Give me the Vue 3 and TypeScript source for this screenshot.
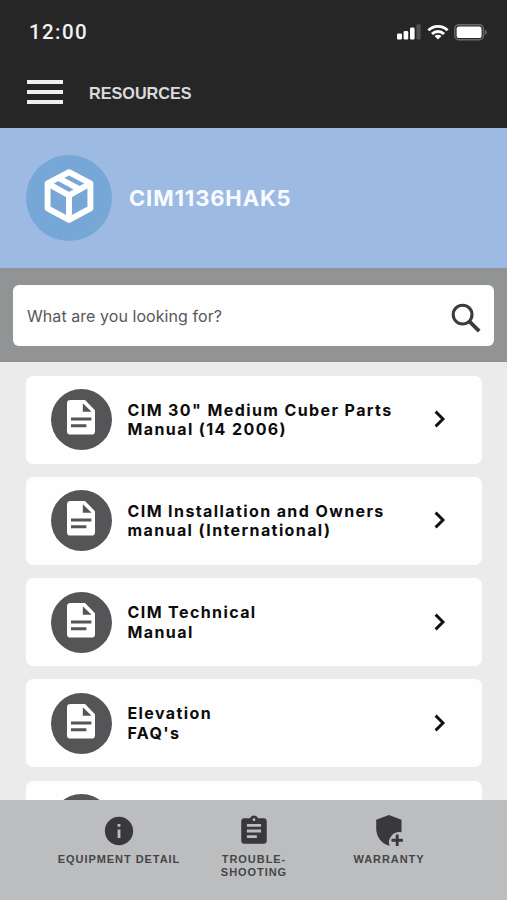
<script setup lang="ts">
interface Resource {
  id: number
  lines: string[]
}

const resources: Resource[] = [
  { id: 1, lines: ['CIM 30" Medium Cuber Parts', 'Manual (14 2006)'] },
  { id: 2, lines: ['CIM Installation and Owners', 'manual (International)'] },
  { id: 3, lines: ['CIM Technical', 'Manual'] },
  { id: 4, lines: ['Elevation', "FAQ's"] },
  { id: 5, lines: [] },
]
</script>

<template>
  <div class="screen">
    <header class="header">
      <div class="status">
        <span class="time">12:00</span>
        <div class="indicators">
          <svg class="signal" width="24" height="16" viewBox="0 0 24 16">
            <rect x="0" y="9.6" width="5" height="6" rx="1.3" fill="#fff" />
            <rect x="6.6" y="7" width="4.6" height="8.6" rx="1.3" fill="#fff" />
            <rect x="13" y="3.6" width="4.6" height="12" rx="1.3" fill="#fff" />
            <rect x="19.4" y="0.3" width="4.2" height="15.3" rx="1.3" fill="#515151" />
          </svg>
          <svg class="wifi" width="22" height="16" viewBox="0 0 22 16">
            <g fill="none" stroke="#fff" stroke-width="2.9">
              <path d="M1.4 6.3a13.6 13.6 0 0 1 19.2 0" />
              <path d="M5 10a8.5 8.5 0 0 1 12 0" />
            </g>
            <path d="M11 15.6 7.5 12.1a5 5 0 0 1 7 0z" fill="#fff" />
          </svg>
          <svg class="battery" width="34" height="17" viewBox="0 0 34 17">
            <rect x="0.8" y="0.8" width="28.6" height="15" rx="4" fill="none" stroke="#6a6a6a" stroke-width="1.4" />
            <rect x="2.6" y="2.5" width="25" height="11.6" rx="2.2" fill="#fff" />
            <path d="M30.8 5.6c2.6 1 2.6 4.6 0 5.6z" fill="#6a6a6a" />
          </svg>
        </div>
      </div>
      <div class="titlebar">
        <button class="menu" aria-label="Menu"><i></i><i></i><i></i></button>
        <h1>RESOURCES</h1>
      </div>
    </header>

    <section class="equipment">
      <div class="equipment-icon">
        <svg width="52" height="58" viewBox="0 0 52 58">
          <g fill="none" stroke="#fff" stroke-width="5.9">
            <path d="M26 5.2 47.4 16.4V41.4L26 52.8 4.6 41.4V16.4z" stroke-linejoin="round" />
            <path d="M4.6 16.4 26 28.4 47.4 16.4M26 28.4V52.8M14.5 10.5 37.2 22.6" />
          </g>
        </svg>
      </div>
      <h2>CIM1136HAK5</h2>
    </section>

    <section class="search">
      <label class="search-box">
        <input type="text" placeholder="What are you looking for?" />
        <svg width="32" height="32" viewBox="0 0 32 32" fill="none" stroke="#3c3c3c">
          <circle cx="12.6" cy="12.6" r="9.4" stroke-width="3.1" />
          <path d="M19.4 19.4 29.2 29.2" stroke-width="3.8" />
        </svg>
      </label>
    </section>

    <main class="list">
      <article v-for="item in resources" :key="item.id" class="card">
        <div class="doc">
          <svg width="28" height="35" viewBox="0 0 28 35">
            <path d="M3.4 0H18L28 10.2V31.2Q28 34.6 24.6 34.6H3.4Q0 34.6 0 31.2V3.4Q0 0 3.4 0z" fill="#fff" />
            <path d="M15.8 3.2V11.8H24.6z" fill="#555557" />
            <path d="M4 19H24.4M4 25.8H19.4" stroke="#555557" stroke-width="3.1" />
          </svg>
        </div>
        <h3><span v-for="line in item.lines" :key="line">{{ line }}</span></h3>
        <svg class="chevron" width="12" height="18" viewBox="0 0 12 18" fill="none" stroke="#111" stroke-width="2.9">
          <path d="M1.6 1.6 9 9 1.6 16.4" />
        </svg>
      </article>
    </main>

    <nav class="tabs">
      <a class="tab">
        <svg width="34" height="34" viewBox="0 0 24 24" fill="#39393b">
          <path d="M12 2C6.48 2 2 6.48 2 12s4.48 10 10 10 10-4.48 10-10S17.52 2 12 2zm1 15h-2v-6h2v6zm0-8h-2V7h2v2z" />
        </svg>
        <span>EQUIPMENT DETAIL</span>
      </a>
      <a class="tab">
        <svg width="34" height="34" viewBox="0 0 24 24" fill="#39393b">
          <path d="M19 3h-4.180C14.400 1.840 13.300 1 12 1c-1.300 0-2.400.84-2.820 2H5c-1.100 0-2 .9-2 2v14c0 1.100.9 2 2 2h14c1.100 0 2-.9 2-2V5c0-1.100-.9-2-2-2zm-7 0c.55 0 1 .45 1 1s-.45 1-1 1-1-.45-1-1 .45-1 1-1zm2 14H7v-2h7v2zm3-4H7v-2h10v2zm0-4H7V7h10v2z" />
        </svg>
        <span>TROUBLE-<br />SHOOTING</span>
      </a>
      <a class="tab">
        <svg width="34" height="34" viewBox="0 0 34 34">
          <path d="M16.9 1 29.500 5.700V18.200A10.500 10.500 0 0 0 17.600 32C9.300 29.800 4.200 22.800 4.200 14.600V5.700z" fill="#39393b" />
          <path d="M25.200 20.600V32M19.500 26.300H30.900" stroke="#39393b" stroke-width="2.900" />
        </svg>
        <span>WARRANTY</span>
      </a>
    </nav>
  </div>
</template>

<style>
body {
  margin: 0;
  overflow: hidden;
}
</style>

<style scoped>
.screen {
  display: flex;
  flex-direction: column;
  width: 507px;
  height: 900px;
  overflow: hidden;
  background: #ebebeb;
  font-family: Inter, "Liberation Sans", sans-serif;
}
h1, h2, h3 {
  margin: 0;
}
.header {
  flex: none;
  height: 127.5px;
  background: #262626;
}
.status {
  display: flex;
  justify-content: space-between;
  align-items: center;
  height: 64px;
  padding: 0 19px 0 29px;
}
.time {
  color: #f2f2f2;
  font: 500 20.5px/24px Roboto, sans-serif;
  letter-spacing: 1.4px;
}
.indicators {
  display: flex;
  align-items: center;
}
.wifi {
  margin-left: 6px;
}
.battery {
  margin-left: 5px;
}
.titlebar {
  display: flex;
  align-items: center;
  height: 56px;
  padding-left: 27px;
}
.menu {
  display: flex;
  flex-direction: column;
  gap: 6px;
  width: 36px;
  padding: 0;
  border: 0;
  background: none;
}
.menu i {
  height: 4px;
  background: #f0eeee;
}
h1 {
  margin: 2px 0 0 26px;
  color: #dadada;
  font: 700 16.2px/20px "Liberation Sans", sans-serif;
}
.equipment {
  flex: none;
  display: flex;
  align-items: center;
  height: 140.5px;
  padding-left: 26px;
  background: #9dbbe2;
}
.equipment-icon {
  display: flex;
  align-items: center;
  justify-content: center;
  width: 86px;
  height: 86px;
  border-radius: 50%;
  background: #76a7d7;
}
.equipment-icon svg {
  margin-bottom: 3px;
}
h2 {
  margin-left: 17px;
  color: #f8fbff;
  font-size: 22px;
  font-weight: 650;
  letter-spacing: 0.85px;
}
.search {
  flex: none;
  height: 94px;
  box-sizing: border-box;
  padding: 17px 13px 16px;
  background: #929394;
}
.search-box {
  display: flex;
  align-items: center;
  height: 61px;
  box-sizing: border-box;
  padding: 0 12px 0 14px;
  border-radius: 6px;
  background: #fefefe;
}
.search-box input {
  flex: 1;
  min-width: 0;
  margin-top: 1px;
  padding: 0;
  border: 0;
  outline: 0;
  background: none;
  font: 400 16px/24px Inter, sans-serif;
  letter-spacing: 0.06px;
}
.search-box svg {
  margin-top: 4px;
}
.search-box input::placeholder {
  color: #585858;
  opacity: 1;
}
.list {
  flex: 1;
  min-height: 0;
  overflow: hidden;
  display: flex;
  flex-direction: column;
  gap: 13.3px;
  padding: 13.5px 25px 0 26px;
}
.card {
  flex: none;
  display: flex;
  align-items: center;
  height: 88px;
  box-sizing: border-box;
  padding: 0 36px 0 25px;
  border-radius: 7px;
  background: #fefefe;
}
.doc {
  display: flex;
  align-items: center;
  justify-content: center;
  width: 61px;
  height: 61px;
  border-radius: 50%;
  background: #555557;
}
.doc svg {
  margin: 0 1px 4px 0;
}
h3 {
  flex: 1;
  margin: 1px 0 0 15.5px;
  color: #0c0c0c;
  font-size: 16px;
  line-height: 19.5px;
  font-weight: 650;
  letter-spacing: 1.4px;
  white-space: nowrap;
}
h3 span {
  display: block;
}
.chevron {
  margin-bottom: 1px;
}
.tabs {
  flex: none;
  display: grid;
  grid-template-columns: repeat(3, 135px);
  justify-content: center;
  height: 100px;
  background: #bcbdbf;
}
.tab {
  display: flex;
  flex-direction: column;
  align-items: center;
  padding-top: 14px;
}
.tab span {
  margin: 5px 0 0 1px;
  color: #454547;
  font: 700 11px/12.5px "Liberation Sans", sans-serif;
  letter-spacing: 0.95px;
  text-align: center;
  white-space: nowrap;
}
</style>
